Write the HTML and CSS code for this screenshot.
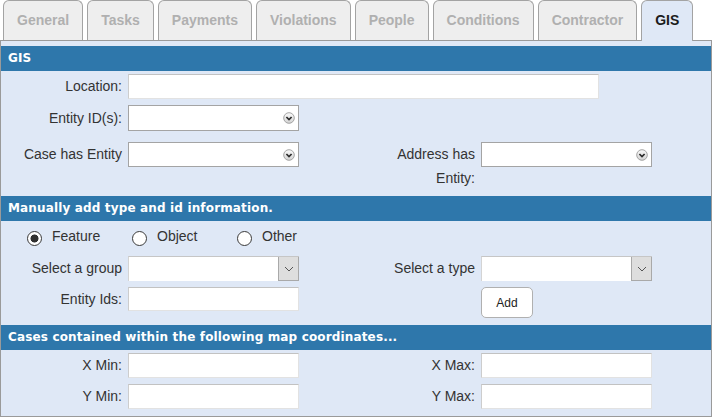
FILE: index.html
```html
<!DOCTYPE html>
<html lang="en">
<head>
<meta charset="utf-8">
<title>GIS</title>
<link rel="stylesheet" href="styles.css">
</head>
<body>
<div class="tabs">
  <div class="tab">General</div>
  <div class="tab">Tasks</div>
  <div class="tab">Payments</div>
  <div class="tab">Violations</div>
  <div class="tab">People</div>
  <div class="tab">Conditions</div>
  <div class="tab">Contractor</div>
  <div class="tab active">GIS</div>
</div>
<div class="panel">
  <div class="bar bar-top">GIS</div>

  <div class="row r-loc">
    <label class="lbl">Location:</label>
    <input class="txt wide" type="text">
  </div>

  <div class="row r-ent">
    <label class="lbl tall">Entity ID(s):</label>
    <div class="sel tall">
      <svg class="circ" width="12" height="12" viewBox="0 0 12 12"><defs><linearGradient id="g1" x1="0" y1="0" x2="0" y2="1"><stop offset="0" stop-color="#fbfbfb"/><stop offset="1" stop-color="#d2d2d2"/></linearGradient></defs><circle cx="6" cy="6" r="5.3" fill="url(#g1)" stroke="#9c9c9c" stroke-width="0.9"/><path d="M3.4 5 L6 7.6 L8.6 5" fill="none" stroke="#2c2c2c" stroke-width="1.7"/></svg>
    </div>
  </div>

  <div class="row r-case">
    <label class="lbl">Case has Entity</label>
    <div class="sel">
      <svg class="circ" width="12" height="12" viewBox="0 0 12 12"><circle cx="6" cy="6" r="5.3" fill="url(#g1)" stroke="#9c9c9c" stroke-width="0.9"/><path d="M3.4 5 L6 7.6 L8.6 5" fill="none" stroke="#2c2c2c" stroke-width="1.7"/></svg>
    </div>
    <label class="lbl two">Address has<br>Entity:</label>
    <div class="sel">
      <svg class="circ" width="12" height="12" viewBox="0 0 12 12"><circle cx="6" cy="6" r="5.3" fill="url(#g1)" stroke="#9c9c9c" stroke-width="0.9"/><path d="M3.4 5 L6 7.6 L8.6 5" fill="none" stroke="#2c2c2c" stroke-width="1.7"/></svg>
    </div>
  </div>

  <div class="bar bar-mid">Manually add type and id information.</div>

  <div class="radios">
    <div class="opt"><input class="radio" type="radio" name="kind" checked><span>Feature</span></div>
    <div class="opt"><input class="radio" type="radio" name="kind"><span>Object</span></div>
    <div class="opt"><input class="radio" type="radio" name="kind"><span>Other</span></div>
  </div>

  <div class="row r-grp">
    <label class="lbl">Select a group</label>
    <div class="dd"><span class="dd-btn"><svg width="10" height="6" viewBox="0 0 10 6"><path d="M1 1 L5 5 L9 1" fill="none" stroke="#555" stroke-width="1"/></svg></span></div>
    <label class="lbl">Select a type</label>
    <div class="dd"><span class="dd-btn"><svg width="10" height="6" viewBox="0 0 10 6"><path d="M1 1 L5 5 L9 1" fill="none" stroke="#555" stroke-width="1"/></svg></span></div>
  </div>

  <div class="row r-ids">
    <label class="lbl short">Entity Ids:</label>
    <input class="txt short" type="text">
    <span></span>
    <button class="btn" type="button">Add</button>
  </div>

  <div class="bar bar-low">Cases contained within the following map coordinates...</div>

  <div class="row r-x">
    <label class="lbl">X Min:</label>
    <input class="txt" type="text">
    <label class="lbl">X Max:</label>
    <input class="txt" type="text">
  </div>

  <div class="row r-y">
    <label class="lbl">Y Min:</label>
    <input class="txt" type="text">
    <label class="lbl">Y Max:</label>
    <input class="txt" type="text">
  </div>
</div>
</body>
</html>
```
FILE: styles.css
```css
html, body {
  margin: 0;
  padding: 0;
  background: #ffffff;
}
body {
  width: 712px;
  height: 417px;
  overflow: hidden;
  font-family: "Liberation Sans", Arial, sans-serif;
  font-size: 14px;
  color: #333333;
}

/* tabs */
.tabs {
  display: flex;
  align-items: flex-start;
  gap: 4px;
  padding-left: 3px;
  height: 40px;
}
.tab {
  height: 39px;
  line-height: 38px;
  padding: 0 13px;
  border: 1px solid #a3a3a3;
  border-bottom: none;
  border-radius: 6px 6px 0 0;
  background: #eeeeee;
  color: #b0b0b0;
  font-weight: bold;
  font-size: 14px;
}
.tab.active {
  height: 40px;
  margin-bottom: -1px;
  background: #dfe8f6;
  color: #1c1c1c;
  position: relative;
  z-index: 1;
}

/* panel */
.panel {
  border: 1px solid #9a9a9a;
  background: #dfe8f6;
  padding: 5px 0 7px;
}
.bar {
  height: 25px;
  line-height: 25px;
  padding-left: 7px;
  background: #2e77ab;
  color: #ffffff;
  font-family: "DejaVu Sans", Verdana, sans-serif;
  font-weight: bold;
  font-size: 12px;
  letter-spacing: 0.15px;
}
.bar-mid { margin-top: 6px; }
.bar-low { margin-top: 7px; }

.row {
  display: grid;
  grid-template-columns: 127px 171px 182px 171px;
  align-items: start;
}
.r-loc { margin-top: 3px; }
.r-ent { margin-top: 6px; }
.r-case { margin-top: 11px; }
.r-grp { margin-top: 6px; }
.r-ids { margin-top: 6px; }
.r-x { margin-top: 3px; }
.r-y { margin-top: 6px; }

.lbl {
  text-align: right;
  padding-right: 6px;
  line-height: 25px;
  white-space: nowrap;
}
.lbl.tall { line-height: 26px; }
.lbl.two { line-height: 24px; }
.lbl.short { line-height: 24px; }

.txt {
  box-sizing: border-box;
  width: 171px;
  height: 25px;
  margin: 0;
  padding: 0 3px;
  border: 1px solid;
  border-color: #c2c2c2 #e2e2e2 #e2e2e2 #cdcdcd;
  background: #ffffff;
  font-family: "Liberation Sans", Arial, sans-serif;
  font-size: 14px;
  outline: none;
}
.txt.wide {
  grid-column: 2 / 5;
  width: 471px;
}
.txt.short { height: 24px; }

.sel {
  box-sizing: border-box;
  width: 171px;
  height: 25px;
  border: 1px solid #a4a4a4;
  background: #ffffff;
  display: flex;
  align-items: center;
  justify-content: flex-end;
  padding-right: 3px;
}
.sel.tall { height: 26px; }
.circ { display: block; }

/* radios */
.radios {
  display: flex;
  margin-top: 3px;
  height: 26px;
  padding-left: 26px;
}
.opt {
  display: flex;
  align-items: flex-start;
  width: 105px;
  line-height: 24px;
}
.radio {
  -webkit-appearance: none;
  appearance: none;
  box-sizing: border-box;
  width: 15px;
  height: 15px;
  margin: 7px 10px 0 0;
  border: 1px solid #3a3a3a;
  border-radius: 50%;
  background: #ffffff;
  flex: none;
}
.radio:checked {
  background: radial-gradient(circle, #303030 0 3.7px, #ffffff 4.3px);
}

/* plain dropdowns */
.dd {
  box-sizing: border-box;
  width: 171px;
  height: 25px;
  display: flex;
  justify-content: flex-end;
  background: #ffffff;
  border-top: 1px solid #c6c6c6;
  border-left: 1px solid #d4d4d4;
}
.dd-btn {
  box-sizing: border-box;
  width: 21px;
  display: flex;
  align-items: center;
  justify-content: center;
  background: #dedede;
  border: 1px solid #a9a9a9;
  border-top: none;
}
.dd-btn svg { display: block; }

.btn {
  box-sizing: border-box;
  width: 52px;
  height: 31px;
  margin: 0;
  padding: 0;
  border: 1px solid #b0b0b0;
  border-radius: 5px;
  background: #ffffff;
  color: #222222;
  font-family: "Liberation Sans", Arial, sans-serif;
  font-size: 12px;
}
```
